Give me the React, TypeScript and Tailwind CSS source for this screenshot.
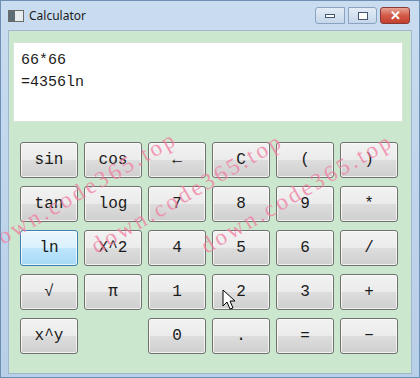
import React from "react";

const rows: string[][] = [
  ["sin", "cos", "←", "C", "(", ")"],
  ["tan", "log", "7", "8", "9", "*"],
  ["ln", "X^2", "4", "5", "6", "/"],
  ["√", "π", "1", "2", "3", "+"],
  ["x^y", "", "0", ".", "=", "−"],
];

function Key({ label }: { label: string }) {
  if (!label) return <div />;
  const hot = label === "ln";
  return (
    <button
      type="button"
      className={
        "h-[36px] rounded-[3px] border text-[16px] text-[#1a1a1a] shadow-[inset_0_0_0_1px_rgba(255,255,255,0.7)] " +
        (hot
          ? "border-[#3c7fb1] bg-[linear-gradient(#eaf6fd_0%,#d9f0fc_50%,#bee6fd_50%,#a7d9f5_100%)]"
          : "border-[#707070] bg-[linear-gradient(#f2f2f2_0%,#ebebeb_50%,#dddddd_50%,#cfcfcf_100%)]")
      }
      style={{ fontFamily: '"Liberation Mono", "DejaVu Sans Mono", monospace' }}
    >
      {label}
    </button>
  );
}

function Cursor() {
  return (
    <svg className="absolute left-[221px] top-[288px]" width="14" height="22" viewBox="0 0 14 22">
      <path d="M1 1 L1 17 L5 13 L8 20 L11 19 L8 12 L13 12 Z" fill="#fff" stroke="#000" strokeWidth="1" />
    </svg>
  );
}

function Watermark({ x, y }: { x: number; y: number }) {
  return (
    <div
      className="pointer-events-none absolute origin-left -rotate-[30deg] whitespace-nowrap text-[23px] tracking-[3px] text-[#f27ca0]/75"
      style={{ left: x, top: y, fontFamily: '"Liberation Serif", serif' }}
    >
      down.code365.top
    </div>
  );
}

export default function App() {
  return (
    <div className="relative flex h-[378px] w-[420px] flex-col overflow-hidden border border-[#6d8fb3] bg-[linear-gradient(#c9dcf0,#b8cfe8)]">
      {/* title bar */}
      <div className="flex h-[29px] shrink-0 items-center pl-[7px] pr-[9px]">
        <div className="flex h-[12px] w-[16px] items-center border border-[#6b6b6b] bg-[linear-gradient(90deg,#5d6b73_0%,#5d6b73_45%,#e6ecef_45%)]" />
        <span
          className="ml-[5px] text-[12px] text-[#1b1b1b]"
          style={{ fontFamily: '"Noto Sans", "Liberation Sans", sans-serif' }}
        >
          Calculator
        </span>
        <div className="ml-auto flex items-center">
          <div className="flex h-[17px] w-[30px] items-center justify-center rounded-l-[3px] border border-[#8aa3c0] bg-[linear-gradient(#e3ecf6,#c6d7ea)]">
            <div className="h-[4px] w-[10px] border border-[#43566e] bg-white" />
          </div>
          <div className="ml-[3px] flex h-[17px] w-[29px] items-center justify-center rounded-r-[3px] border border-[#8aa3c0] bg-[linear-gradient(#e3ecf6,#c6d7ea)]">
            <div className="h-[8px] w-[10px] border border-[#43566e] bg-white" />
          </div>
          <div className="ml-[3px] flex h-[17px] w-[30px] items-center justify-center rounded-[3px] border border-[#8a3a34] bg-[linear-gradient(#e8a393,#d35a47_50%,#c3402f)] text-[13px] font-bold leading-none text-white">
            ✕
          </div>
        </div>
      </div>

      {/* client area */}
      <div className="mx-[7px] mb-[3px] flex flex-1 flex-col border border-[#9fb7cf] bg-[#cbe8cf] px-[4px] pt-[11px]">
        <div
          className="mr-[4px] h-[80px] border border-[#d6e6d6] bg-white px-[7px] pt-[7px] text-[15px] leading-[22px] text-[#1a1a1a]"
          style={{ fontFamily: '"Liberation Mono", "DejaVu Sans Mono", monospace' }}
        >
          <div>66*66</div>
          <div>=4356ln</div>
        </div>

        <div className="mt-[20px] grid grid-cols-[repeat(6,58px)] gap-x-[6px] gap-y-[8px] pl-[7px]">
          {rows.flat().map((k, i) => (
            <Key key={i} label={k} />
          ))}
        </div>
      </div>

      <Watermark x={-14} y={228} />
      <Watermark x={92} y={230} />
      <Watermark x={202} y={230} />
      <Cursor />
    </div>
  );
}
